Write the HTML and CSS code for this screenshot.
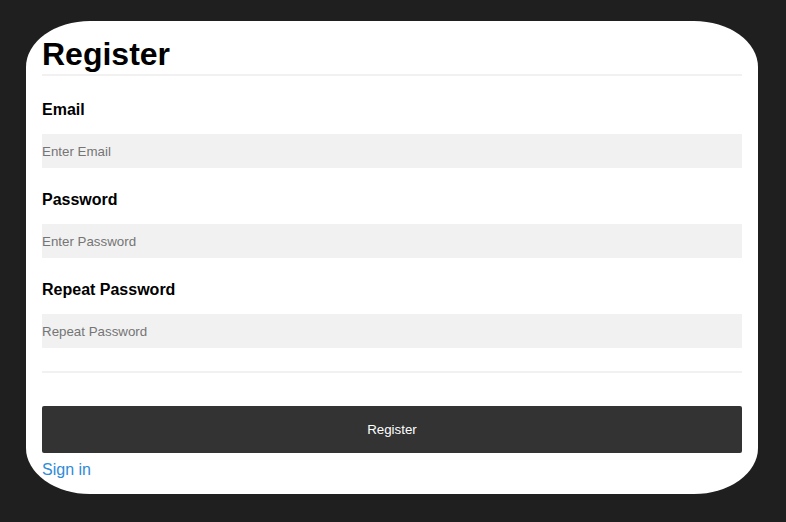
FILE: index.html
```html
<!DOCTYPE html>
<html lang="en">
<head>
<meta charset="utf-8">
<title>Register</title>
<link rel="stylesheet" href="styles.css">
</head>
<body>
<form class="card">
  <h1 class="title">Register</h1>
  <hr class="rule rule-top">
  <label class="label" for="email">Email</label>
  <input class="field" type="text" id="email" placeholder="Enter Email">
  <label class="label" for="psw">Password</label>
  <input class="field" type="password" id="psw" placeholder="Enter Password">
  <label class="label" for="psw-repeat">Repeat Password</label>
  <input class="field" type="password" id="psw-repeat" placeholder="Repeat Password">
  <hr class="rule rule-bottom">
  <button type="button" class="btn">Register</button>
  <a class="link" href="#">Sign in</a>
</form>
</body>
</html>
```

FILE: styles.css
```css
html, body {
  margin: 0;
  padding: 0;
}
body {
  background: #1f1f1f;
  font-family: "Liberation Sans", Arial, sans-serif;
  padding: 21px 28px 28px 26px;
  min-height: 522px;
  box-sizing: border-box;
}
.card {
  width: 732px;
  box-sizing: border-box;
  background: #fff;
  border-radius: 64px / 46px;
  padding: 15px 16px 15px 16px;
  display: flex;
  flex-direction: column;
}
.title {
  margin: 0;
  font-size: 32px;
  line-height: 37px;
  font-weight: bold;
  color: #000;
}
.rule {
  border: 0;
  height: 2px;
  background: #f1f1f1;
  margin: 0;
  width: 100%;
}
.rule-top {
  margin-top: 1px;
  margin-bottom: 22px;
}
.label {
  display: block;
  font-size: 16px;
  line-height: 20px;
  font-weight: bold;
  color: #000;
  padding-top: 2px;
  margin-bottom: 14px;
}
.field {
  display: block;
  height: 34px;
  box-sizing: border-box;
  border: 0;
  background: #f1f1f1;
  padding: 0;
  margin: 0 0 20px 0;
  font-family: "Liberation Sans", Arial, sans-serif;
  font-size: 13.333px;
  color: #333;
  outline: none;
}
.field::placeholder {
  color: #757575;
}
.rule-bottom {
  margin-top: 3px;
  margin-bottom: 33px;
}
.btn {
  height: 47px;
  border: 0;
  border-radius: 2px;
  background: #333;
  color: #fff;
  font-family: "Liberation Sans", Arial, sans-serif;
  font-size: 13.333px;
  padding: 0;
  margin: 0 0 8px 0;
  cursor: pointer;
}
.link {
  font-size: 16px;
  line-height: 18px;
  color: #2e8bd8;
  text-decoration: none;
  align-self: flex-start;
}
```
